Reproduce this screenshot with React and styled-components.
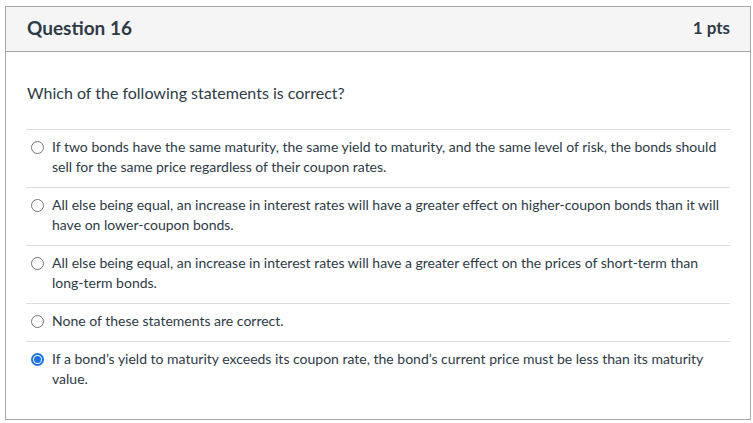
import React from "react";
import styled, { createGlobalStyle } from "styled-components";

const Global = createGlobalStyle`
  html, body { margin: 0; padding: 0; background: #ffffff; }
  body { font-family: Lato, "Noto Sans", sans-serif; color: #2d3b45; }
`;

const Page = styled.div`
  padding: 6px 2px 3px 5px;
`;

const Card = styled.div`
  border: 1px solid #a8a8a8;
  background: #fff;
`;

const Header = styled.div`
  display: flex;
  align-items: center;
  justify-content: space-between;
  box-sizing: border-box;
  height: 45px;
  padding: 0 20px 3px 21px;
  background: #f5f5f5;
  border-bottom: 1px solid #a8a8a8;
`;

const Title = styled.div`
  font-size: 19px;
  font-weight: 700;
  color: #2d3b45;
`;

const Points = styled.div`
  font-size: 17px;
  font-weight: 700;
  color: #2d3b45;
`;

const Body = styled.div`
  padding: 29px 20px 20px 20px;
`;

const QuestionText = styled.div`
  font-size: 16px;
  line-height: 24px;
  padding: 0 0 24px 1px;
  border-bottom: 1px solid #dcdcdc;
`;

const Option = styled.label`
  display: flex;
  align-items: flex-start;
  padding: 7px 0 10px 5px;
  border-bottom: ${(p) => (p.$last ? "none" : "1px solid #dcdcdc")};
  font-size: 14px;
  line-height: 20px;
`;

const Radio = styled.span`
  flex: none;
  width: 13px;
  height: 13px;
  margin: 4px 8px 0 0;
  border-radius: 50%;
  box-sizing: border-box;
  border: ${(p) => (p.$checked ? "2px solid #1a73e8" : "1px solid #767676")};
  display: flex;
  align-items: center;
  justify-content: center;
  &::after {
    content: "";
    display: ${(p) => (p.$checked ? "block" : "none")};
    width: 7px;
    height: 7px;
    border-radius: 50%;
    background: #1a73e8;
  }
`;

const OptionText = styled.span`
  max-width: 672px;
`;

const options = [
  "If two bonds have the same maturity, the same yield to maturity, and the same level of risk, the bonds should sell for the same price regardless of their coupon rates.",
  "All else being equal, an increase in interest rates will have a greater effect on higher-coupon bonds than it will have on lower-coupon bonds.",
  "All else being equal, an increase in interest rates will have a greater effect on the prices of short-term than long-term bonds.",
  "None of these statements are correct.",
  "If a bond’s yield to maturity exceeds its coupon rate, the bond’s current price must be less than its maturity value.",
];

export default function App() {
  return (
    <>
      <Global />
      <Page>
        <Card>
          <Header>
            <Title>Question 16</Title>
            <Points>1 pts</Points>
          </Header>
          <Body>
            <QuestionText>Which of the following statements is correct?</QuestionText>
            {options.map((o, i) => (
              <Option key={i} $last={i === options.length - 1}>
                <Radio $checked={i === 4} />
                <OptionText>{o}</OptionText>
              </Option>
            ))}
          </Body>
        </Card>
      </Page>
    </>
  );
}
